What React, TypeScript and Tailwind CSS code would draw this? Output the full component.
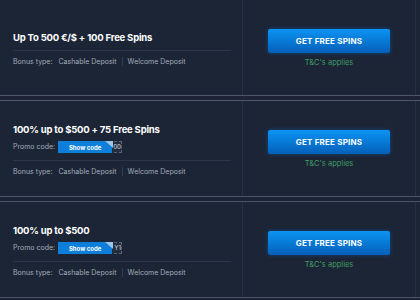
import React from 'react';

type Offer = {
  title: string;
  code?: string;
};

const offers: Offer[] = [
  { title: 'Up To 500 €/$ + 100 Free Spins' },
  { title: '100% up to $500 + 75 Free Spins', code: 'SPIN100' },
  { title: '100% up to $500', code: 'WELCY1' },
];

function PromoCode({ code }: { code: string }) {
  return (
    <div className="relative flex h-[12px] w-[64px] items-center border border-dashed border-[#5b6477] bg-[#242d3e]">
      {/* reveal cover */}
      <div className="-my-px -ml-px flex h-[12px] w-[54px] items-center justify-center bg-[#0d7fda] text-[6px] font-bold text-white">
        Show code
      </div>
      <div className="flex w-[9px] justify-end overflow-hidden whitespace-nowrap text-[6px] font-semibold leading-none text-[#a9b0bd]">
        {code.slice(-2)}
      </div>
      <div className="absolute left-[46px] -top-px h-[7px] w-[8px] bg-[#9fc6e8] [clip-path:polygon(0_0,100%_100%,100%_0)]" />
    </div>
  );
}

function OfferCard({ offer }: { offer: Offer }) {
  return (
    <div className="flex h-[97px] border-y border-[#4b566a] bg-[#1c2536]">
      <div className="flex w-[243px] flex-col justify-center border-r border-[#273144] pl-[13px] pr-[11px] pt-[2px]">
        <div className="text-[9.5px] font-bold leading-[14px] tracking-[-0.2px] text-white">{offer.title}</div>
        {offer.code && (
          <div className="mt-[4px] flex h-[12px] items-center gap-[3px]">
            <span className="text-[7px] text-[#a3abb8]">Promo code:</span>
            <PromoCode code={offer.code} />
          </div>
        )}
        <div className={offer.code ? 'mt-[7px] h-px bg-[#2c3649]' : 'mt-[5px] h-px bg-[#2c3649]'} />
        <div className="mt-[5px] flex h-[10px] items-center text-[7px] leading-none text-[#a3abb8]">
          <span>Bonus type:</span>
          <span className="ml-[6px]">Cashable Deposit</span>
          <span className="mx-[5px] h-[9px] w-px bg-[#323c4f]" />
          <span>Welcome Deposit</span>
        </div>
      </div>
      <div className="flex w-[173px] flex-col items-center justify-center border-r border-[#273144] pt-[2px]">
        <button className="h-[24px] w-[122px] rounded-[2px] bg-gradient-to-b from-[#0d93f3] to-[#0560b9] text-[8px] font-bold tracking-[0.2px] text-white shadow-[0_0_4px_rgba(13,120,220,0.45)]">
          GET FREE SPINS
        </button>
        <div className="mt-[5px] text-[7.5px] leading-[10px] text-[#3f9b63]">T&amp;C's applies</div>
      </div>
      <div className="flex-1" />
    </div>
  );
}

export default function App() {
  return (
    <div className="h-[300px] w-[420px] overflow-hidden bg-[#1b2334] font-['Inter','Open_Sans',sans-serif]">
      <div className="-mt-px flex flex-col gap-[4px]">
        {offers.map((o) => (
          <OfferCard key={o.title} offer={o} />
        ))}
      </div>
    </div>
  );
}
